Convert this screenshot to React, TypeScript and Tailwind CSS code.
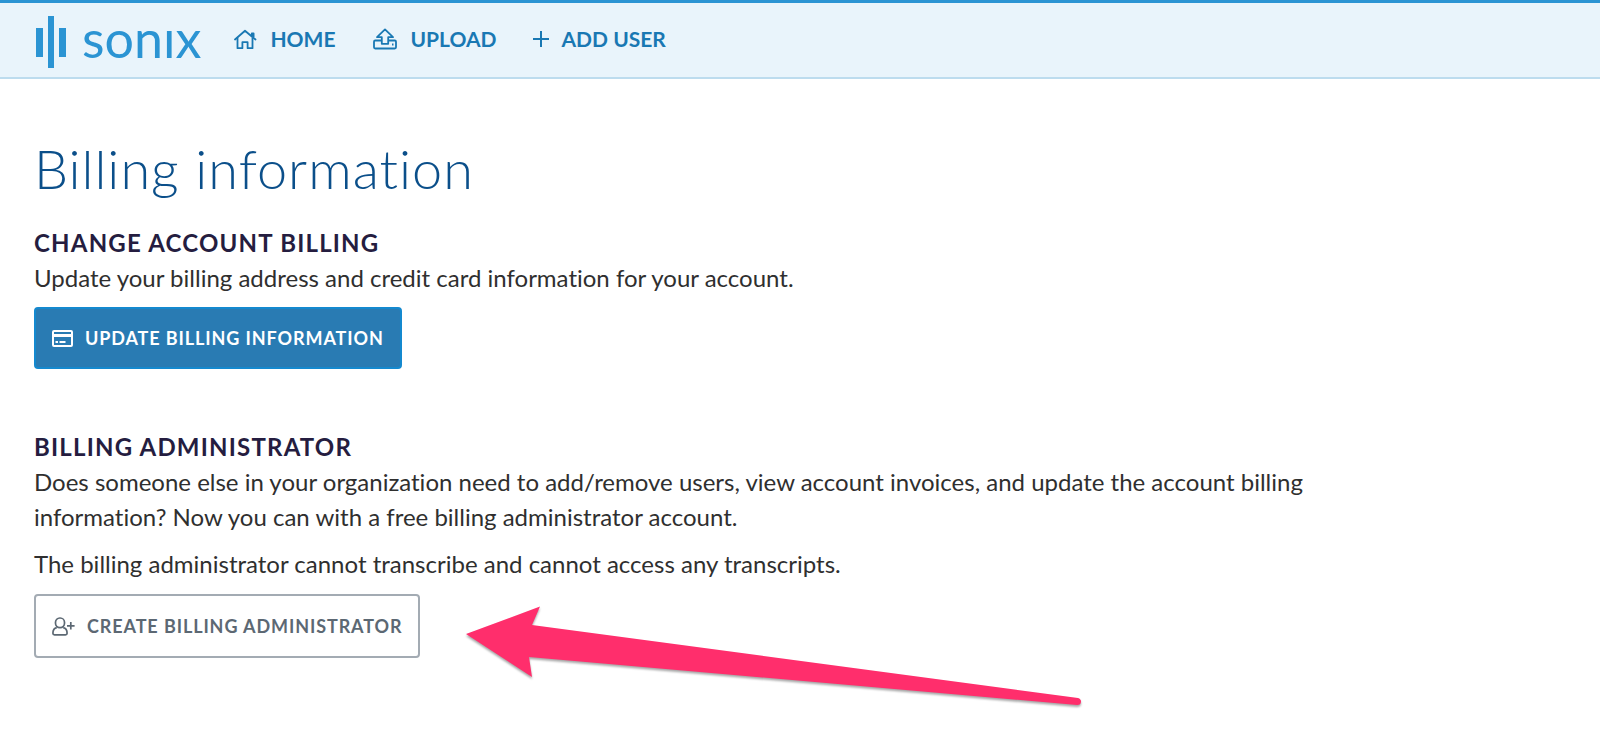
import type { ReactNode } from 'react';

interface NavItem {
    label: string;
    href: string;
    icon: ReactNode;
}

const HomeIcon = () => (
    <svg viewBox="0 0 24 24" className="w-6 h-6" fill="none" stroke="currentColor" strokeWidth="1.8" strokeLinejoin="round" strokeLinecap="round" aria-hidden="true">
        <path d="M2 12.500 12 3.800l6.800 5.700V6.500h1.800v4.500l1.900 1.500" />
        <path d="M4.500 11v10.200h4.900v-6h5.200v6h4.900V11" />
    </svg>
);

const UploadIcon = () => (
    <svg viewBox="0 0 26 24" className="w-[26px] h-6" fill="none" stroke="currentColor" strokeWidth="1.8" strokeLinejoin="round" aria-hidden="true">
        <path d="M9.800 16.800h6.400V10.200h4.800L13 2.400 5 10.200h4.800Z" />
        <path d="M9.800 13.500H3.200Q2 13.500 2 14.700V20.300Q2 21.500 3.200 21.500H22.800Q24 21.500 24 20.300V14.700Q24 13.500 22.800 13.500H16.200" />
        <path d="M20 17.500h1.500" />
    </svg>
);

const PlusIcon = () => (
    <svg viewBox="0 0 16 16" className="w-4 h-4" fill="none" stroke="currentColor" strokeWidth="2" aria-hidden="true">
        <path d="M8 0v16M0 8h16" />
    </svg>
);

const CardIcon = () => (
    <svg viewBox="0 0 21 17" className="w-[21px] h-[17px]" fill="none" stroke="currentColor" aria-hidden="true">
        <rect x="1" y="1" width="19" height="15" rx="1" strokeWidth="2" />
        <path d="M1 5.500h19" strokeWidth="3" />
        <path d="M3.500 12h2.500M7.500 12h6" strokeWidth="2" />
    </svg>
);

const UserPlusIcon = () => (
    <svg viewBox="0 0 23 19" className="w-[23px] h-[19px]" fill="none" stroke="currentColor" strokeWidth="1.700" strokeLinejoin="round" aria-hidden="true">
        <rect x="3.500" y="1" width="9" height="9.600" rx="4.300" />
        <path d="M4.800 10.600C2 11.200.9 13 .9 16.200q0 1.600 1.600 1.600h11q1.600 0 1.600-1.600c0-3.200-1.100-5-3.900-5.600" />
        <path d="M18.800 5v7.600M15 8.800h7.600" />
    </svg>
);

const Logo = () => (
    <a href="#" aria-label="Sonix" className="flex items-center gap-4 pt-1 text-[#2b94d3]">
        <svg viewBox="0 0 30 52" className="w-[30px] h-[52px]" fill="currentColor" aria-hidden="true">
            <rect x="0" y="12" width="7" height="29" />
            <rect x="12" y="0" width="6" height="52" />
            <rect x="23" y="12" width="7" height="29" />
        </svg>
        <span className="text-[52px] leading-[52px] -mt-2">sonıx</span>
    </a>
);

const navItems: NavItem[] = [
    { label: 'Home', href: '#home', icon: <HomeIcon /> },
    { label: 'Upload', href: '#upload', icon: <UploadIcon /> },
    { label: 'Add user', href: '#add-user', icon: <PlusIcon /> },
];

const Header = () => (
    <header className="flex items-center gap-8 border-t-[3px] border-b-2 border-t-[#2b94d3] border-b-[#bddcee] bg-[#e9f4fb] pl-9 h-[79px]">
        <Logo />
        <nav className="flex items-center gap-9 pb-0.5">
            {navItems.map((item) => (
                <a
                    key={item.label}
                    href={item.href}
                    className="flex items-center gap-[13px] text-[21px] leading-7 font-bold uppercase text-[#1978b3]"
                >
                    {item.icon}
                    {item.label}
                </a>
            ))}
        </nav>
    </header>
);

const Arrow = () => (
    <svg
        viewBox="0 0 620 106"
        className="absolute left-full top-2 ml-[45px] w-[620px] h-[106px] pointer-events-none drop-shadow-[0_2px_1px_rgba(0,0,0,0.35)]"
        fill="#ff2e6c"
        aria-hidden="true"
    >
        <path d="M1 32 75 4.500 67 23 613 96Q616 97 616 99.500 616 103 612 103L64 55 67 75Z" />
    </svg>
);

export default function App() {
    return (
        <div className="bg-white font-[Lato,sans-serif] [font-variant-ligatures:none] text-[#2f2f2f]">
            <Header />
            <main className="px-[34px] pt-[57px] pb-20">
                <h1 className="text-[54px] leading-[66px] font-light tracking-[1px] text-[#0b4f8a]">
                    Billing information
                </h1>

                <section className="mt-[23px] text-2xl leading-[35px]">
                    <h2 className="font-bold uppercase tracking-wider text-[#251d40]">Change account billing</h2>
                    <p>Update your billing address and credit card information for your account.</p>
                    <button
                        type="button"
                        className="mt-3 flex items-center gap-3 rounded-sm border-2 border-[#1489cf] bg-[#297bb3] px-4 h-[62px] text-lg font-bold uppercase tracking-wider text-white cursor-pointer"
                    >
                        <CardIcon />
                        Update billing information
                    </button>
                </section>

                <section className="mt-[60px] max-w-[1300px] text-2xl leading-[35px]">
                    <h2 className="font-bold uppercase tracking-wider text-[#251d40]">Billing administrator</h2>
                    <p>
                        Does someone else in your organization need to add/remove users, view account invoices, and
                        update the account billing information? Now you can with a free billing administrator account.
                    </p>
                    <p className="mt-3">The billing administrator cannot transcribe and cannot access any transcripts.</p>
                    <div className="relative mt-[13px] w-fit">
                        <button
                            type="button"
                            className="flex items-center gap-3 rounded-sm border-2 border-[#a3abb3] bg-white px-4 h-16 text-lg font-bold uppercase tracking-wider text-[#5c6873] cursor-pointer"
                        >
                            <UserPlusIcon />
                            Create billing administrator
                        </button>
                        <Arrow />
                    </div>
                </section>
            </main>
        </div>
    );
}
